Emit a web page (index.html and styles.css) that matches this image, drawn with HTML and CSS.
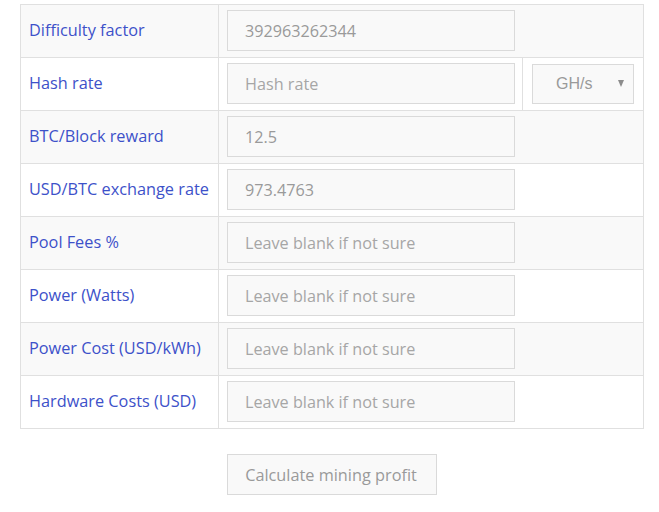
FILE: index.html
```html
<!DOCTYPE html>
<html>
<head>
<meta charset="utf-8">
<link rel="stylesheet" href="styles.css">
</head>
<body>
<div class="page">
  <table class="calc">
    <colgroup>
      <col class="c1">
      <col class="c2">
      <col class="c3">
    </colgroup>
    <tr class="odd">
      <td class="label">Difficulty factor</td>
      <td colspan="2"><input class="field" type="text" value="392963262344"></td>
    </tr>
    <tr>
      <td class="label">Hash rate</td>
      <td><input class="field" type="text" placeholder="Hash rate"></td>
      <td><span class="select-wrap"><select class="unit"><option>GH/s</option></select></span></td>
    </tr>
    <tr class="odd">
      <td class="label">BTC/Block reward</td>
      <td colspan="2"><input class="field" type="text" value="12.5"></td>
    </tr>
    <tr>
      <td class="label">USD/BTC exchange rate</td>
      <td colspan="2"><input class="field" type="text" value="973.4763"></td>
    </tr>
    <tr class="odd">
      <td class="label">Pool Fees %</td>
      <td colspan="2"><input class="field" type="text" placeholder="Leave blank if not sure"></td>
    </tr>
    <tr>
      <td class="label">Power (Watts)</td>
      <td colspan="2"><input class="field" type="text" placeholder="Leave blank if not sure"></td>
    </tr>
    <tr class="odd">
      <td class="label">Power Cost (USD/kWh)</td>
      <td colspan="2"><input class="field" type="text" placeholder="Leave blank if not sure"></td>
    </tr>
    <tr>
      <td class="label">Hardware Costs (USD)</td>
      <td colspan="2"><input class="field" type="text" placeholder="Leave blank if not sure"></td>
    </tr>
  </table>
  <div class="actions">
    <button class="btn" type="button">Calculate mining profit</button>
  </div>
</div>
</body>
</html>
```
FILE: styles.css
```css
html, body {
  margin: 0;
  padding: 0;
  background: #fff;
}
.page {
  padding: 4px 15px 0 20px;
  font-family: "Open Sans", "DejaVu Sans", sans-serif;
}
.calc {
  width: 100%;
  border-collapse: collapse;
  table-layout: fixed;
}
.calc .c1 {
  width: 198px;
}
.calc .c3 {
  width: 121px;
}
.calc td {
  border: 1px solid #e0e0e0;
  padding: 5px 8px 6px 8px;
  height: 41px;
  vertical-align: middle;
}
.calc td.label {
  color: #3d51c9;
  font-size: 16.3px;
  line-height: 22px;
  padding-top: 4px;
  padding-bottom: 7px;
}
.calc tr.odd td {
  background: #f9f9f9;
}
.field {
  display: block;
  box-sizing: border-box;
  width: 288px;
  height: 41px;
  margin: 0;
  padding: 0 17px;
  border: 1px solid #dadada;
  border-radius: 0;
  background: #f9f9f9;
  color: #9a9a9a;
  font-family: "Open Sans", "DejaVu Sans", sans-serif;
  font-size: 16.2px;
  outline: none;
}
.field::placeholder {
  color: #a6a6a6;
  opacity: 1;
}
.select-wrap {
  position: relative;
  display: block;
  width: 102px;
  margin-left: 1px;
}
.select-wrap::after {
  content: "";
  position: absolute;
  right: 10px;
  top: 16px;
  border-left: 3.5px solid transparent;
  border-right: 3.5px solid transparent;
  border-top: 7px solid #8c8c8c;
  pointer-events: none;
}
.unit {
  display: block;
  box-sizing: border-box;
  width: 102px;
  height: 40px;
  margin: 0;
  padding: 0 0 0 23px;
  border: 1px solid #dadada;
  border-radius: 0;
  background: #f9f9f9;
  color: #9a9a9a;
  font-family: "Liberation Sans", Arial, sans-serif;
  font-size: 16px;
  -webkit-appearance: none;
  appearance: none;
  outline: none;
}
.actions {
  display: flex;
  justify-content: center;
  padding-top: 25px;
}
.btn {
  box-sizing: border-box;
  width: 210px;
  height: 41px;
  margin: 0;
  padding: 0 2px 0 0;
  border: 1px solid #dadada;
  border-radius: 0;
  background: #f9f9f9;
  color: #9a9a9a;
  font-family: "Open Sans", "DejaVu Sans", sans-serif;
  font-size: 16.3px;
}
```
